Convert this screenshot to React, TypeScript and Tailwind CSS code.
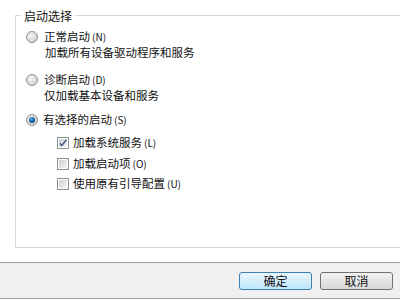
import React from "react";

const font = { fontFamily: '"Noto Sans CJK SC", "Noto Sans", sans-serif' };

function Radio({ checked }: { checked?: boolean }) {
  return (
    <svg width="12" height="12" viewBox="0 0 12 12" className="shrink-0">
      <defs>
        <radialGradient id="rg" cx="0.4" cy="0.4" r="0.7">
          <stop offset="0" stopColor="#f6f6f6" />
          <stop offset="1" stopColor="#c9c9c9" />
        </radialGradient>
        <radialGradient id="rd" cx="0.4" cy="0.35" r="0.7">
          <stop offset="0" stopColor="#6ab0e0" />
          <stop offset="0.6" stopColor="#1c5f95" />
          <stop offset="1" stopColor="#0d3b60" />
        </radialGradient>
      </defs>
      <circle cx="6" cy="6" r="5.5" fill="url(#rg)" stroke="#8f9293" strokeWidth="1" />
      {checked && <circle cx="6" cy="6" r="3" fill="url(#rd)" />}
    </svg>
  );
}

function Check({ checked }: { checked?: boolean }) {
  return (
    <svg width="12" height="12" viewBox="0 0 12 12" className="shrink-0">
      <defs>
        <linearGradient id="cg" x1="0" y1="0" x2="1" y2="1">
          <stop offset="0" stopColor="#cfcfcf" />
          <stop offset="1" stopColor="#f5f5f5" />
        </linearGradient>
      </defs>
      <rect x="0.5" y="0.5" width="11" height="11" fill="#fff" stroke="#8f9293" />
      <rect x="2" y="2" width="8" height="8" fill="url(#cg)" />
      {checked && (
        <path d="M2.8 6.2 L4.8 8.6 L9.4 2.8" fill="none" stroke="#4a5f8a" strokeWidth="1.6" />
      )}
    </svg>
  );
}

function Key({ k }: { k: string }) {
  return <span className="text-[10px] ml-[2px] text-[#111]">({k})</span>;
}

export default function App() {
  return (
    <div className="w-[400px] h-[300px] bg-white overflow-hidden flex flex-col text-[11.5px] text-[#111] leading-none" style={font}>
      <div className="pt-[15px] pl-[15px]">
        <div className="relative h-[233px] w-[400px] border-l border-t border-b border-[#d5d9dc]">
          <span className="absolute -top-[8px] left-[5px] bg-white px-[3px] text-[12px] leading-[16px]">启动选择</span>
          <div className="flex flex-col pl-[10px] pt-[13px]">
            <div className="flex items-center h-[16px]">
              <Radio />
              <span className="ml-[6px]">正常启动<Key k="N" /></span>
            </div>
            <div className="h-[15px] flex items-center pl-[19px]">加载所有设备驱动程序和服务</div>
            <div className="flex items-center h-[16px] mt-[12px]">
              <Radio />
              <span className="ml-[6px]">诊断启动<Key k="D" /></span>
            </div>
            <div className="h-[15px] flex items-center pl-[18px]">仅加载基本设备和服务</div>
            <div className="flex items-center h-[16px] mt-[9px]">
              <Radio checked />
              <span className="ml-[5px]">有选择的启动<Key k="S" /></span>
            </div>
            <div className="flex flex-col pl-[31px] mt-[7px] gap-[4.5px]">
              <div className="flex items-center h-[16px]">
                <Check checked />
                <span className="ml-[4px]">加载系统服务<Key k="L" /></span>
              </div>
              <div className="flex items-center h-[16px]">
                <Check />
                <span className="ml-[4px]">加载启动项<Key k="O" /></span>
              </div>
              <div className="flex items-center h-[16px]">
                <Check />
                <span className="ml-[4px]">使用原有引导配置<Key k="U" /></span>
              </div>
            </div>
          </div>
        </div>
      </div>
      <div className="mt-[14px] h-[37px] bg-[#f0f0f0] border-t border-b border-[#a0a0a0] flex items-center justify-end pr-[7px] gap-[8px]">
        <button className="w-[73px] h-[18px] rounded-[3px] border border-[#3c7fb1] bg-gradient-to-b from-[#eaf6fd] to-[#bee6fd] text-[12px] text-[#111] flex items-center justify-center" style={font}>确定</button>
        <button className="w-[73px] h-[18px] rounded-[3px] border border-[#707070] bg-gradient-to-b from-[#f2f2f2] to-[#d8d8d8] text-[12px] text-[#111] flex items-center justify-center" style={font}>取消</button>
      </div>
      <div className="flex-1 bg-white" />
    </div>
  );
}
